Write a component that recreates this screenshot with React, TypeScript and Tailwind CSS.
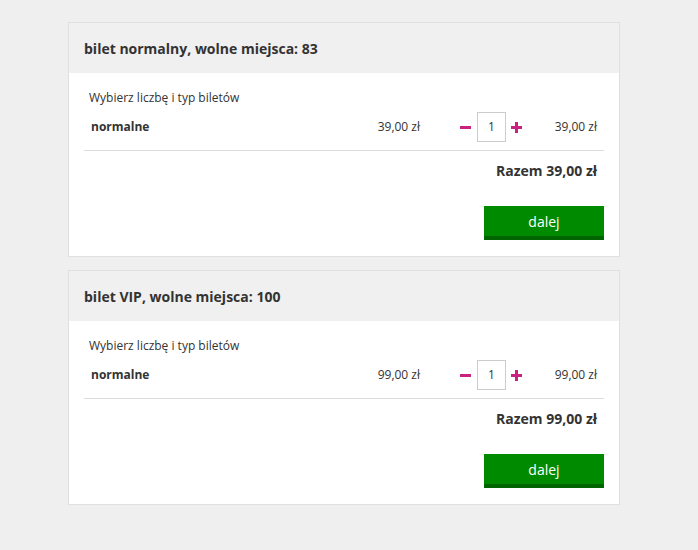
import React from 'react'

type Ticket = { title: string; name: string; price: string }

const tickets: Ticket[] = [
  { title: 'bilet normalny, wolne miejsca: 83', name: 'normalne', price: '39,00 zł' },
  { title: 'bilet VIP, wolne miejsca: 100', name: 'normalne', price: '99,00 zł' },
]

function TicketCard({ t }: { t: Ticket }) {
  return (
    <div className="w-[552px] border border-[#e0e0e0] bg-white">
      <div className="flex h-[50px] items-center bg-[#f0f0f0] px-[15px]">
        <h2 className="text-[14px] font-bold text-[#333]">{t.title}</h2>
      </div>
      <div className="px-[15px] pt-4 pb-4">
        <p className="pl-[5px] text-[12px] leading-[17px] text-[#333]">Wybierz liczbę i typ biletów</p>
        <div className="mt-[6px] flex items-center border-b border-[#ddd] pb-2 pl-[7px] pr-[7px]">
          <span className="flex-1 text-[12px] font-bold text-[#333]">{t.name}</span>
          <span className="text-[12px] text-[#333]">{t.price}</span>
          <div className="ml-[40px] flex items-center">
            <button type="button" aria-label="mniej" className="flex h-[30px] w-[11px] items-center">
              <span className="block h-[3px] w-[11px] bg-[#c9217f]" />
            </button>
            <div className="ml-[6px] flex h-[30px] w-[29px] items-center justify-center border border-[#ccc] text-[12px] text-[#333]">
              1
            </div>
            <button type="button" aria-label="więcej" className="relative ml-[5px] flex h-[30px] w-[11px] items-center justify-center">
              <span className="absolute h-[3px] w-[11px] bg-[#c9217f]" />
              <span className="absolute h-[11px] w-[3px] bg-[#c9217f]" />
            </button>
          </div>
          <span className="w-[75px] text-right text-[12px] text-[#333]">{t.price}</span>
        </div>
        <div className="mt-[10px] pr-[7px] text-right text-[14px] leading-[19px] font-bold text-[#333]">
          Razem {t.price}
        </div>
        <div className="mt-[26px] flex justify-end">
          <button
            type="button"
            className="h-[34px] w-[120px] border-b-4 border-[#006400] bg-[#008a00] text-[14px] text-white"
          >
            dalej
          </button>
        </div>
      </div>
    </div>
  )
}

export default function App() {
  return (
    <div className="min-h-[550px] bg-[#efefef] pt-[22px] pl-[68px] font-['Open_Sans',sans-serif]">
      <div className="flex flex-col gap-[13px]">
        {tickets.map((t) => (
          <TicketCard key={t.title} t={t} />
        ))}
      </div>
    </div>
  )
}
